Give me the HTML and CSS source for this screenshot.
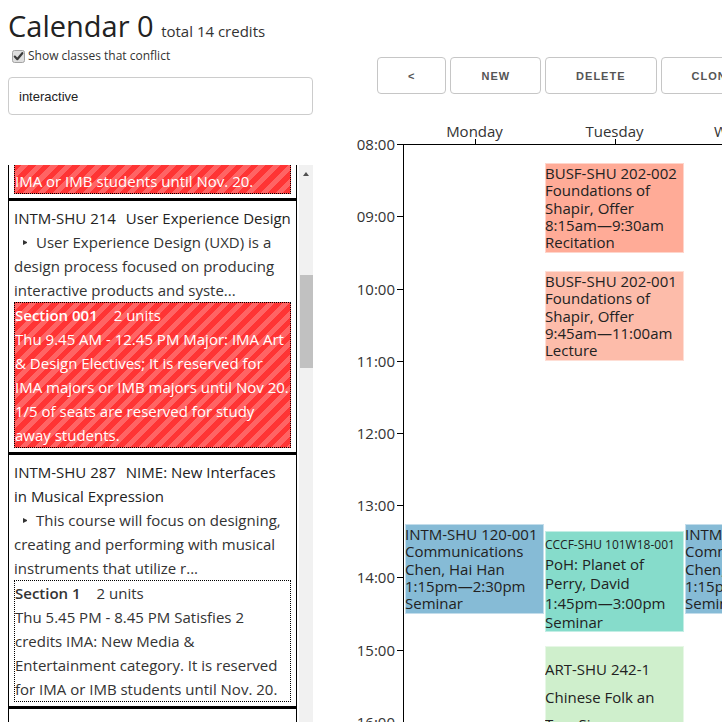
FILE: index.html
```html
<!DOCTYPE html>
<html lang="en">
<head>
<meta charset="utf-8">
<title>Calendar 0</title>
<link rel="stylesheet" href="styles.css">
</head>
<body>
<div class="page">
  <h1 class="title">Calendar 0 <small class="credits">total 14 credits</small></h1>
  <div class="main">
    <aside class="sidebar">
      <label class="conflict">
        <svg class="check" width="13" height="13" viewBox="0 0 13 13"><rect x="0.5" y="0.5" width="12" height="12" rx="2" fill="#dedede" stroke="#a3a3a3"/><path d="M2.8 6.6 L5.3 9.2 L10.3 3.2" fill="none" stroke="#3a3a3a" stroke-width="2.2" stroke-linecap="round" stroke-linejoin="round"/></svg>
        <span>Show classes that conflict</span>
      </label>
      <input class="search" type="text" value="interactive">
      <div class="list">
        <div class="list-view">
          <div class="peek">
            <div class="course">
              <div class="course-title"><span class="code">INTM-SHU 120</span> Communications Lab</div>
              <div class="desc"><span class="marker"></span>Communications Lab is a foundation<br>course in the Interactive Media Arts<br>curriculum...</div>
              <div class="section section-conflict">
                <div><span class="sec-name">Section 001</span> 2 units</div>
                <div>Tue Thu 1.15 PM - 2.30 PM Satisfies<br>2 credits IMA: Foundation. It is reserved for<br>IMA or IMB students until Nov. 20.</div>
              </div>
            </div>
          </div>
          <div class="course">
            <div class="course-title"><span class="code">INTM-SHU 214</span> User Experience Design</div>
            <div class="desc"><span class="marker"></span>User Experience Design (UXD) is a<br>design process focused on producing<br>interactive products and syste...</div>
            <div class="section section-conflict">
              <div><span class="sec-name">Section 001</span> 2 units</div>
              <div>Thu 9.45 AM - 12.45 PM Major: IMA Art<br>&amp; Design Electives; It is reserved for<br>IMA majors or IMB majors until Nov 20.<br>1/5 of seats are reserved for study<br>away students.</div>
            </div>
          </div>
          <div class="course">
            <div class="course-title"><span class="code">INTM-SHU 287</span> NIME: New Interfaces<br>in Musical Expression</div>
            <div class="desc"><span class="marker"></span>This course will focus on designing,<br>creating and performing with musical<br>instruments that utilize r...</div>
            <div class="section">
              <div><span class="sec-name">Section 1</span> 2 units</div>
              <div>Thu 5.45 PM - 8.45 PM Satisfies 2<br>credits IMA: New Media &amp;<br>Entertainment category. It is reserved<br>for IMA or IMB students until Nov. 20.</div>
            </div>
          </div>
          <div class="course">
            <div class="course-title"><span class="code">INTM-SHU 301</span> Creative Innovation</div>
            <div class="desc"><span class="marker"></span>This course explores the creative<br>process and innovation...</div>
          </div>
        </div>
        <div class="scrollbar">
          <div class="scroll-up"></div>
          <div class="thumb"></div>
        </div>
      </div>
    </aside>

    <section class="calendar">
      <div class="toolbar">
        <button class="btn">&lt;</button>
        <button class="btn">NEW</button>
        <button class="btn">DELETE</button>
        <button class="btn">CLONE</button>
        <button class="btn">&gt;</button>
      </div>
      <div class="chart">
        <div class="days">
          <div class="day">Monday</div>
          <div class="day">Tuesday</div>
          <div class="day">Wednesday</div>
        </div>
        <div class="x-axis"></div>
        <div class="y-axis"></div>
        <div class="hours">
          <div class="hour"><span class="hour-label">08:00</span><span class="tick"></span></div>
          <div class="hour"><span class="hour-label">09:00</span><span class="tick"></span></div>
          <div class="hour"><span class="hour-label">10:00</span><span class="tick"></span></div>
          <div class="hour"><span class="hour-label">11:00</span><span class="tick"></span></div>
          <div class="hour"><span class="hour-label">12:00</span><span class="tick"></span></div>
          <div class="hour"><span class="hour-label">13:00</span><span class="tick"></span></div>
          <div class="hour"><span class="hour-label">14:00</span><span class="tick"></span></div>
          <div class="hour"><span class="hour-label">15:00</span><span class="tick"></span></div>
          <div class="hour"><span class="hour-label">16:00</span><span class="tick"></span></div>
        </div>

        <div class="event ev-salmon" style="left:205px;top:69px;height:90px">
          <div>BUSF-SHU 202-002</div><div>Foundations of</div><div>Shapir, Offer</div><div>8:15am—9:30am</div><div>Recitation</div>
        </div>
        <div class="event ev-peach" style="left:205px;top:177px;height:90px">
          <div>BUSF-SHU 202-001</div><div>Foundations of</div><div>Shapir, Offer</div><div>9:45am—11:00am</div><div>Lecture</div>
        </div>
        <div class="event ev-blue" style="left:65px;top:430px;height:90px">
          <div>INTM-SHU 120-001</div><div>Communications</div><div>Chen, Hai Han</div><div>1:15pm—2:30pm</div><div>Seminar</div>
        </div>
        <div class="event ev-teal ev-roomy" style="left:205px;top:437px;height:101px">
          <div class="ev-code-small">CCCF-SHU 101W18-001</div><div>PoH: Planet of</div><div>Perry, David</div><div>1:45pm—3:00pm</div><div>Seminar</div>
        </div>
        <div class="event ev-blue" style="left:345px;top:430px;height:90px">
          <div>INTM-SHU 120-001</div><div>Communications</div><div>Chen, Hai Han</div><div>1:15pm—2:30pm</div><div>Seminar</div>
        </div>
        <div class="event ev-green ev-loose" style="left:205px;top:552px;height:200px">
          <div>ART-SHU 242-1</div><div>Chinese Folk an</div><div>Tan, Si</div>
        </div>
      </div>
    </section>
  </div>
</div>
</body>
</html>
```

FILE: styles.css
```css
* { box-sizing: border-box; }

html, body {
  margin: 0;
  height: 100%;
  overflow: hidden;
  background: #fff;
}

body {
  font-family: "Open Sans", "Liberation Sans", sans-serif;
  color: #333;
}

.page {
  padding-left: 8px;
  height: 722px;
  overflow: hidden;
}

.title {
  margin: 0;
  padding-top: 6px;
  height: 46px;
  font-size: 29px;
  font-weight: 400;
  line-height: 40px;
  color: #222;
  white-space: nowrap;
}

.credits {
  font-size: 15px;
  line-height: 20px;
  color: #333;
}

.main {
  display: flex;
}

/* ---------- sidebar ---------- */
.sidebar {
  width: 305px;
  flex: none;
  display: flex;
  flex-direction: column;
}

.conflict {
  display: flex;
  align-items: center;
  height: 16px;
  margin-top: 2px;
  font-size: 12px;
  line-height: 16px;
  color: #333;
  white-space: nowrap;
}

.check {
  display: block;
  flex: none;
  margin: 0 3px 0 4px;
}

.search {
  display: block;
  margin: 13px 0 0;
  width: 305px;
  height: 38px;
  border: 1px solid #ccc;
  border-radius: 4px;
  padding: 0 10px;
  font: 13px "Liberation Sans", Arial, sans-serif;
  color: #222;
  outline: none;
  background: #fff;
}

.list {
  margin-top: 50px;
  display: flex;
  gap: 2px;
  height: 560px;
}

.list-view {
  width: 289px;
  flex: none;
  overflow: hidden;
}

.peek {
  height: 35px;
  display: flex;
  flex-direction: column;
  justify-content: flex-end;
  overflow: hidden;
}

.peek .course {
  flex: none;
}

.course {
  border: 1px solid #000;
  border-bottom-width: 2px;
  padding: 5px 5px 4px;
  font-size: 15px;
  line-height: 24px;
  white-space: nowrap;
  color: #333;
}

.course-title {
  color: #222;
}

.code {
  margin-right: 6px;
}

.marker {
  display: inline-block;
  width: 0;
  height: 5px;
  border-left: 4px solid #333;
  border-top: 2.5px solid transparent;
  border-bottom: 2.5px solid transparent;
  margin: 0 9px 0 9px;
  vertical-align: 3px;
}

.section {
  border: 1px dotted #000;
}

.section-conflict {
  color: #fff;
  background: repeating-linear-gradient(135deg, #ff6464 0 5px, #ff3434 5px 10.5px);
}

.sec-name {
  font-weight: 600;
  margin-right: 12px;
}

.scrollbar {
  width: 14px;
  flex: none;
  background: #f1f1f1;
  display: flex;
  flex-direction: column;
}

.scroll-up {
  height: 17px;
  display: flex;
  align-items: center;
  justify-content: center;
}

.scroll-up::before {
  content: "";
  border-left: 3.5px solid transparent;
  border-right: 3.5px solid transparent;
  border-bottom: 4px solid #505050;
}

.thumb {
  margin: 93px 0 0 1px;
  width: 13px;
  height: 93px;
  background: #c1c1c1;
}

/* ---------- calendar ---------- */
.calendar {
  flex: none;
  width: 800px;
  margin-left: 27px;
}

.toolbar {
  display: flex;
  gap: 4px;
  margin-top: 11px;
  padding-left: 37px;
  height: 37px;
}

.btn {
  flex: none;
  height: 37px;
  padding: 0 30px;
  border: 1px solid #c6c6c6;
  border-radius: 4px;
  background: #fff;
  font: bold 11px "Liberation Sans", Arial, sans-serif;
  letter-spacing: 1px;
  color: #555;
}

.chart {
  position: relative;
  height: 640px;
  font-size: 15px;
  color: #333;
}

.days {
  position: absolute;
  left: 64.5px;
  top: 27px;
  display: flex;
}

.day {
  position: relative;
  width: 140px;
  text-align: center;
  line-height: 20px;
}

.day::after {
  content: "";
  position: absolute;
  left: 70px;
  top: 18px;
  width: 1px;
  height: 5px;
  background: #000;
}

.x-axis {
  position: absolute;
  left: 57px;
  right: 0;
  top: 50px;
  height: 1px;
  background: #000;
}

.y-axis {
  position: absolute;
  left: 63px;
  top: 50px;
  bottom: 0;
  width: 1px;
  background: #000;
}

.hours {
  position: absolute;
  left: 0;
  top: 40.3px;
}

.hour {
  display: flex;
  height: 72.2px;
}

.hour-label {
  width: 55px;
  text-align: right;
  line-height: 20px;
  height: 20px;
}

.tick {
  margin: 10px 0 0 2px;
  width: 6px;
  height: 1px;
  background: #000;
}

.event {
  position: absolute;
  width: 139px;
  overflow: hidden;
  padding: 2px 0 0 0;
  box-shadow: inset 0 0 0 1px rgba(255, 255, 255, 0.5);
  color: #222;
  font-size: 15px;
  line-height: 17.3px;
  white-space: nowrap;
}

.ev-salmon { background: #ffab97; }
.ev-peach { background: #fdbcaa; }
.ev-blue { background: #86bbd6; }
.ev-teal { background: #86dccb; }
.ev-green { background: #cfefcc; }

.ev-roomy {
  line-height: 19.5px;
  padding-top: 4px;
}

.ev-code-small {
  font-size: 12px;
}

.ev-loose {
  line-height: 27.5px;
  padding-top: 10px;
}
```
